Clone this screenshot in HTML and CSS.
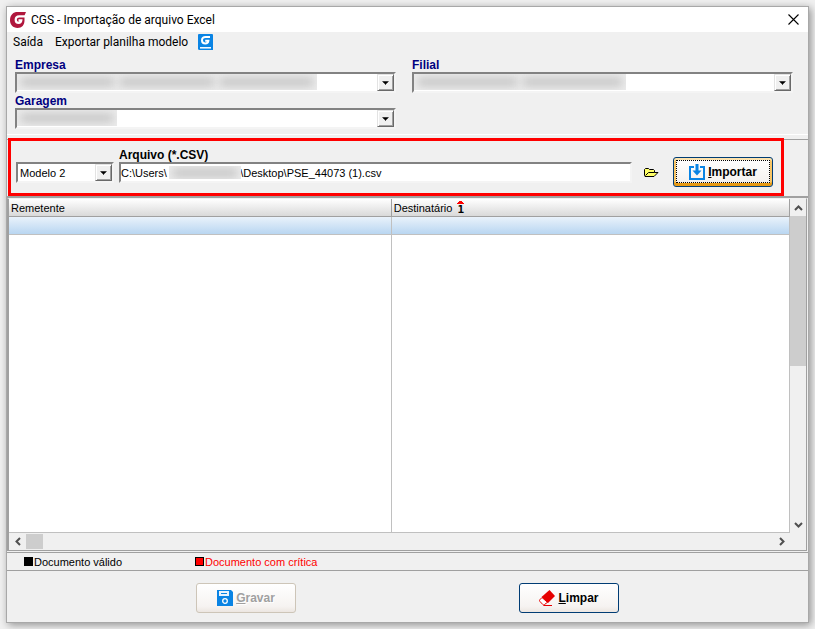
FILE: index.html
```html
<!DOCTYPE html>
<html lang="pt-BR">
<head>
  <meta charset="UTF-8">
  <meta name="viewport" content="width=device-width, initial-scale=1.0">
  <title>CGS - Importação de arquivo Excel</title>
  <link rel="stylesheet" href="styles.css">
</head>
<body>
  <main class="window">
    <header class="titlebar">
      <svg class="logo" width="16" height="16" viewBox="0 0 16 16">
        <path fill="#b0173d" d="M6 0h10l-1.500 3.500v5C14.500 13 12 16 7.500 16 3 16 0 12.600 0 8.300 0 4 2 1 6 0z"/>
        <path fill="none" stroke="#fff" stroke-width="2.200" d="M15 4.300H9.300C7 4.300 5.700 5.800 5.700 7.700s1.300 3.200 3 3.200c1.500 0 2.400-.9 2.600-2.500H8.500"/>
      </svg>
      <h1>CGS - Importação de arquivo Excel</h1>
      <button class="close" type="button" aria-label="Fechar">
        <svg width="11" height="11" viewBox="0 0 11 11"><path stroke="#000" stroke-width="1.100" d="M.5.5l10 10M10.500.5l-10 10"/></svg>
      </button>
    </header>

    <nav class="menu">
      <a href="#">Saída</a>
      <a href="#">Exportar planilha modelo</a>
      <a href="#" class="menu-icon" aria-label="CGS">
        <svg width="15" height="16" viewBox="0 0 15 16">
          <path fill="#0a84e4" d="M1 0h13a1 1 0 0 1 1 1v15H1.500A1.500 1.500 0 0 1 0 14.500V1a1 1 0 0 1 1-1z"/>
          <path fill="none" stroke="#fff" stroke-width="2" d="M12 3H7.600C5.400 3 4 4.200 4 6.200S5.400 9.600 7.400 9.600c1.800 0 2.800-1.100 3-2.900H7.200"/>
          <path stroke="#fff" stroke-width="1.500" d="M2 13.800h11"/>
        </svg>
      </a>
    </nav>

    <section class="filters">
      <div class="field">
        <label for="empresa">Empresa</label>
        <div class="combo">
          <select id="empresa"><option></option></select>
          <span class="masked masked-empresa"><i></i><i></i><i></i></span>
          <svg class="arrow" width="17" height="17" viewBox="0 0 17 17"><path d="M5 7h7v1h-1v1h-1v1H9v1H8v-1H7V9H6V8H5z"/></svg>
        </div>
      </div>
      <div class="field">
        <label for="filial">Filial</label>
        <div class="combo">
          <select id="filial"><option></option></select>
          <span class="masked masked-filial"><i></i><i></i></span>
          <svg class="arrow" width="17" height="17" viewBox="0 0 17 17"><path d="M5 7h7v1h-1v1h-1v1H9v1H8v-1H7V9H6V8H5z"/></svg>
        </div>
      </div>
      <div class="field">
        <label for="garagem">Garagem</label>
        <div class="combo">
          <select id="garagem"><option></option></select>
          <span class="masked masked-garagem"><i></i></span>
          <svg class="arrow" width="17" height="17" viewBox="0 0 17 17"><path d="M5 7h7v1h-1v1h-1v1H9v1H8v-1H7V9H6V8H5z"/></svg>
        </div>
      </div>
    </section>

    <section class="import-panel">
      <form class="import-form">
        <div class="combo combo-model">
          <select aria-label="Modelo"><option>Modelo 2</option></select>
          <svg class="arrow" width="17" height="17" viewBox="0 0 17 17"><path d="M5 7h7v1h-1v1h-1v1H9v1H8v-1H7V9H6V8H5z"/></svg>
        </div>
        <div class="field field-file">
          <label for="arquivo">Arquivo (*.CSV)</label>
          <div class="file">
            <input id="arquivo" type="text" value="C:\Users\&nbsp;&nbsp;&nbsp;&nbsp;&nbsp;&nbsp;&nbsp;&nbsp;&nbsp;&nbsp;&nbsp;&nbsp;&nbsp;&nbsp;&nbsp;&nbsp;&nbsp;&nbsp;&nbsp;&nbsp;&nbsp;&nbsp;&nbsp;&nbsp;\Desktop\PSE_44073 (1).csv">
            <span class="masked masked-user"><i></i></span>
          </div>
        </div>
        <button class="browse" type="button" aria-label="Procurar arquivo">
          <svg width="15" height="11" viewBox="0 0 15 11">
            <path fill="#ffff66" stroke="#000" d="M.5 8.500v-6l1-1h3l1 1h4l1 1v2h3.500l-4 4h-9z"/>
            <path fill="none" stroke="#000" d="M1.500 8.500l3-3h6"/>
          </svg>
        </button>
        <button class="btn btn-focus" type="submit">
          <svg width="16" height="16" viewBox="0 0 16 16">
            <path fill="none" stroke="#0a84e4" stroke-width="2" d="M5 3H1v12h14V3h-4"/>
            <path fill="#0a84e4" d="M6.500 0h3v6.500h3L8 11.500 3.500 6.500h3z"/>
          </svg>
          <span><u>I</u>mportar</span>
        </button>
      </form>
    </section>

    <section class="grid">
      <table>
        <thead>
          <tr>
            <th class="col-sender">Remetente</th>
            <th>
              <div class="sorted">Destinatário
                <span class="sort"><svg width="7" height="3" viewBox="0 0 7 3"><path fill="#f00" d="M2 0h3v1h1v1h1v1H0V2h1V1h1z"/></svg>1</span>
              </div>
            </th>
          </tr>
        </thead>
        <tbody>
          <tr class="selected"><td></td><td></td></tr>
          <tr class="filler"><td></td><td></td></tr>
        </tbody>
      </table>
      <div class="scroll scroll-y">
        <button type="button" aria-label="Rolar para cima"><svg width="9" height="6" viewBox="0 0 9 6"><path d="M1 5l3.500-3.500L8 5"/></svg></button>
        <div class="thumb"></div>
        <button type="button" aria-label="Rolar para baixo"><svg width="9" height="6" viewBox="0 0 9 6"><path d="M1 1l3.500 3.500L8 1"/></svg></button>
      </div>
      <div class="scroll scroll-x">
        <button type="button" aria-label="Rolar para a esquerda"><svg width="6" height="9" viewBox="0 0 6 9"><path d="M5 1L1.500 4.500 5 8"/></svg></button>
        <div class="thumb"></div>
        <button type="button" aria-label="Rolar para a direita"><svg width="6" height="9" viewBox="0 0 6 9"><path d="M1 1l3.500 3.500L1 8"/></svg></button>
      </div>
    </section>

    <section class="legend">
      <span class="legend-item valid">Documento válido</span>
      <span class="legend-item invalid">Documento com crítica</span>
    </section>

    <footer class="actions">
      <button class="btn" type="button" disabled>
        <svg width="16" height="16" viewBox="0 0 16 16">
          <path fill="#0a84e4" d="M0 0h14l2 2v14H0z"/>
          <path fill="#e8f3fc" d="M2 1h10v5H2z"/>
          <path fill="#0a84e4" d="M4 3h6v1H4z"/>
          <circle cx="8" cy="11" r="2.300" fill="none" stroke="#fff" stroke-width="1.300"/>
        </svg>
        <span><u>G</u>ravar</span>
      </button>
      <button class="btn" type="button">
        <svg width="16" height="16" viewBox="0 0 16 16">
          <path fill="#fff" stroke="#e60000" d="M3 7.500L.8 9.800c-.4.500-.4 1 0 1.500l3 3.200c.5.500 1.200.5 1.700 0l3-2.200z"/>
          <path fill="#e60000" d="M10.500 0L16 6l-7 7-6.500-6z"/>
          <path stroke="#e60000" d="M4.500 15.500H13"/>
        </svg>
        <span><u>L</u>impar</span>
      </button>
    </footer>
  </main>
</body>
</html>
```

FILE: styles.css
```css
* {
  box-sizing: border-box;
}
body {
  margin: 0;
  padding: 6px;
  min-height: 100vh;
  display: flex;
  background-color: #f0f0f0;
  font-family: "Liberation Sans", Arial, sans-serif;
  font-size: 11px;
  line-height: 14px;
  color: #000;
}
svg {
  display: block;
  flex: none;
}
button,
select,
input {
  font: inherit;
  color: inherit;
}
.window {
  flex: 1;
  display: flex;
  flex-direction: column;
  background-color: #f0f0f0;
  border: 1px solid #a8a8a8;
  box-shadow: 2px 2px 8px rgba(0, 0, 0, 0.4);
}

/* Title bar and menu */
.titlebar {
  display: flex;
  align-items: center;
  height: 25px;
  padding: 0 9px 0 3px;
  gap: 5px;
  background-color: #fff;
}
.titlebar h1 {
  flex: 1;
  margin: 0;
  font-family: Roboto, "Noto Sans", sans-serif;
  font-size: 12px;
  font-weight: normal;
}
.close {
  padding: 0;
  border: 0;
  background: none;
}
.menu {
  display: flex;
  align-items: center;
  height: 19px;
  padding: 0 6px;
  gap: 12px;
  font-family: Roboto, "Noto Sans", sans-serif;
  font-size: 12px;
}
.menu a {
  color: #000;
  text-decoration: none;
}
.menu .menu-icon {
  margin-left: -2px;
}

/* Fields */
.filters {
  display: grid;
  grid-template-columns: 1fr 1fr;
  gap: 1px 16px;
  padding: 7px 15px 5px 8px;
  border-bottom: 1px solid #fff;
}
.field {
  display: flex;
  flex-direction: column;
}
.field label {
  font-size: 12px;
  font-weight: bold;
  color: #000080;
}
.combo,
.file {
  display: grid;
  height: 21px;
  background-color: #fff;
  border: 2px solid;
  border-color: #828282 #f4f4f4 #f4f4f4 #828282;
}
.combo > *,
.file > * {
  grid-area: 1 / 1;
}
.combo select,
.file input {
  width: 100%;
  height: 17px;
  padding: 0 2px;
  border: 0;
  outline: 0;
  background: none;
  appearance: none;
}
.file input {
  padding: 0;
}
.arrow {
  justify-self: end;
  background-color: #f0f0f0;
  border: 1px solid;
  border-color: #e3e3e3 #696969 #696969 #e3e3e3;
  box-shadow: inset 1px 1px #fff, inset -1px -1px #a0a0a0;
  pointer-events: none;
}

/* Hidden values */
.masked {
  display: flex;
  align-items: center;
  gap: 6px;
  height: 16px;
  padding: 0 4px;
  overflow: hidden;
  background-color: #ebebeb;
  pointer-events: none;
}
.masked i {
  flex: 1;
  height: 8px;
  background-color: #c4c4c4;
  filter: blur(4px);
}
.masked-empresa {
  width: 300px;
}
.masked-filial {
  width: 212px;
}
.masked-garagem {
  width: 100px;
}
.file .masked-user {
  width: 72px;
  height: 13px;
  margin: 2px 0 0 48px;
}

/* Import panel */
.import-panel {
  margin-top: 3px;
  padding-left: 1px;
  padding-right: 24px;
  border-bottom: 2px solid #a0a0a0;
  background: linear-gradient(#f0f0f0 1px, #a0a0a0 1px, #a0a0a0 2px, #f0f0f0 2px);
}
.import-form {
  display: flex;
  align-items: flex-end;
  height: 58px;
  padding: 0 8px 10px 5px;
  border: 3px solid #f00;
}
.combo-model {
  width: 98px;
  margin-right: 5px;
}
.field-file {
  flex: 1;
}
.field-file label {
  color: #000;
}
.browse {
  display: flex;
  align-items: center;
  height: 21px;
  padding: 0 14px 0 12px;
  border: 0;
  background: none;
}
.btn {
  display: flex;
  align-items: center;
  justify-content: center;
  gap: 3px;
  width: 100px;
  height: 30px;
  padding: 0;
  font-size: 12px;
  font-weight: bold;
  border: 1px solid #003c74;
  border-radius: 3px;
  background: linear-gradient(#fff, #f6f3f1 80%, #ece6e1);
}
.btn-focus {
  position: relative;
  margin-bottom: -4px;
  box-shadow: inset 0 2px #fce2ad, inset 0 -3px #e89a14, inset 2px 0 #f8c566, inset -2px 0 #f8c566;
}
.btn-focus::after {
  content: "";
  position: absolute;
  inset: 2px 2px 3px;
  border: 1px dotted #000;
}
.btn:disabled {
  color: #a0a0a0;
  border-color: #cdc5b8;
  text-shadow: 1px 1px #fff;
}

/* Document grid */
.grid {
  flex: 1;
  display: grid;
  grid-template-columns: 1fr 16px;
  grid-template-rows: 1fr 17px;
  margin-right: 1px;
  border: 1px solid #a0a0a0;
  border-left-width: 2px;
  border-top-color: #f0f0f0;
}
.grid table {
  width: 100%;
  height: 100%;
  border-collapse: separate;
  border-spacing: 0;
  background-color: #fff;
  border-bottom: 1px solid #c0c0c0;
}
.grid th,
.grid td {
  height: 18px;
  padding: 0 2px;
  border-right: 1px solid #c0c0c0;
  border-bottom: 1px solid #c0c0c0;
}
.grid th {
  font-weight: normal;
  text-align: left;
  border-color: #a0a0a0;
  background: linear-gradient(#fff, #d9d9d9);
}
.grid .col-sender {
  width: 49%;
}
.grid .selected td {
  background: linear-gradient(#e9f2fb, #b9d6f1);
}
.grid .filler td {
  height: auto;
  border-bottom: 0;
}
.sorted {
  display: flex;
  align-items: center;
  gap: 5px;
}
.sort {
  display: flex;
  flex-direction: column;
  align-items: center;
  font-family: "DejaVu Sans Mono", monospace;
  font-size: 11px;
  font-weight: bold;
  line-height: 11px;
}
.scroll {
  display: flex;
}
.scroll-y {
  flex-direction: column;
}
.scroll button {
  display: flex;
  align-items: center;
  justify-content: center;
  width: 17px;
  height: 17px;
  padding: 0;
  border: 0;
  background: none;
}
.scroll path {
  fill: none;
  stroke: #505050;
  stroke-width: 2;
}
.scroll .thumb {
  background-color: #cdcdcd;
}
.scroll-y .thumb {
  height: 150px;
}
.scroll-x .thumb {
  width: 17px;
  height: 15px;
  margin-top: 1px;
}
.scroll button:last-child {
  margin: auto 0 0;
}
.scroll-x button:last-child {
  margin: 0 0 0 auto;
}

/* Legend and actions */
.legend {
  display: grid;
  grid-template-columns: 171px 1fr;
  align-items: center;
  height: 19px;
  margin-top: 1px;
  padding-left: 17px;
  border-top: 1px solid #a0a0a0;
  border-bottom: 1px solid #a0a0a0;
}
.legend-item {
  display: flex;
  align-items: center;
  gap: 1px;
}
.legend-item::before {
  content: "";
  box-sizing: border-box;
  width: 9px;
  height: 9px;
  border: 1px solid #000;
  background-color: #000;
}
.invalid {
  color: #f00;
}
.invalid::before {
  background-color: #f00;
}
.actions {
  display: flex;
  justify-content: space-between;
  padding: 12px 189px 9px;
}
```
